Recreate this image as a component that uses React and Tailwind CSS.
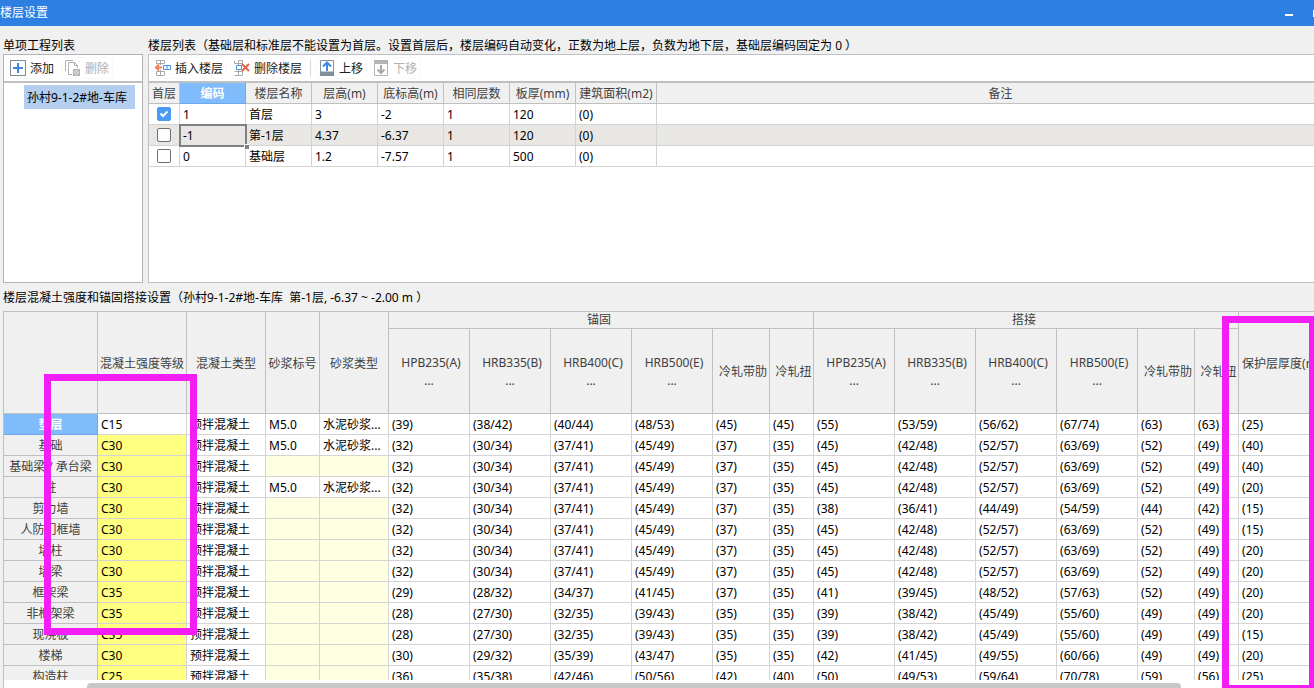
import React, { useState } from 'react';
import { clsx } from 'clsx';

const FLOORS = [
  { code: '1', name: '首层', height: '3', bottom: '-2', same: '1', slab: '120', area: '(0)', note: '' },
  { code: '-1', name: '第-1层', height: '4.37', bottom: '-6.37', same: '1', slab: '120', area: '(0)', note: '' },
  { code: '0', name: '基础层', height: '1.2', bottom: '-7.57', same: '1', slab: '500', area: '(0)', note: '' },
];

const FLOOR_HEADS = ['楼层名称', '层高(m)', '底标高(m)', '相同层数', '板厚(mm)', '建筑面积(m2)', '备注'];

const REBARS = ['HPB235(A)', 'HRB335(B)', 'HRB400(C)', 'HRB500(E)'];

// name, grade, mortar grade, mortar type, anchorage x6, lap x6, cover
const MEMBERS = [
  ['垫层', 'C15', 'M5.0', '水泥砂浆...', '39', '38/42', '40/44', '48/53', '45', '45', '55', '53/59', '56/62', '67/74', '63', '63', '25'],
  ['基础', 'C30', 'M5.0', '水泥砂浆...', '32', '30/34', '37/41', '45/49', '37', '35', '45', '42/48', '52/57', '63/69', '52', '49', '40'],
  ['基础梁 / 承台梁', 'C30', '', '', '32', '30/34', '37/41', '45/49', '37', '35', '45', '42/48', '52/57', '63/69', '52', '49', '40'],
  ['柱', 'C30', 'M5.0', '水泥砂浆...', '32', '30/34', '37/41', '45/49', '37', '35', '45', '42/48', '52/57', '63/69', '52', '49', '20'],
  ['剪力墙', 'C30', '', '', '32', '30/34', '37/41', '45/49', '37', '35', '38', '36/41', '44/49', '54/59', '44', '42', '15'],
  ['人防门框墙', 'C30', '', '', '32', '30/34', '37/41', '45/49', '37', '35', '45', '42/48', '52/57', '63/69', '52', '49', '15'],
  ['墙柱', 'C30', '', '', '32', '30/34', '37/41', '45/49', '37', '35', '45', '42/48', '52/57', '63/69', '52', '49', '20'],
  ['墙梁', 'C30', '', '', '32', '30/34', '37/41', '45/49', '37', '35', '45', '42/48', '52/57', '63/69', '52', '49', '20'],
  ['框架梁', 'C35', '', '', '29', '28/32', '34/37', '41/45', '37', '35', '41', '39/45', '48/52', '57/63', '52', '49', '20'],
  ['非框架梁', 'C35', '', '', '28', '27/30', '32/35', '39/43', '35', '35', '39', '38/42', '45/49', '55/60', '49', '49', '20'],
  ['现浇板', 'C35', '', '', '28', '27/30', '32/35', '39/43', '35', '35', '39', '38/42', '45/49', '55/60', '49', '49', '15'],
  ['楼梯', 'C30', '', '', '30', '29/32', '35/39', '43/47', '35', '35', '42', '41/45', '49/55', '60/66', '49', '49', '20'],
  ['构造柱', 'C25', '', '', '36', '35/38', '42/46', '50/56', '42', '40', '50', '49/53', '59/64', '70/78', '59', '56', '25'],
];

const AddIcon = () => (
  <svg width="16" height="16" viewBox="0 0 16 16" fill="none">
    <rect x="0.5" y="0.5" width="15" height="15" stroke="#7b8c98" />
    <path d="M8 3v10M3 8h10" stroke="#3d8be0" strokeWidth="2" />
  </svg>
);

const RemoveIcon = () => (
  <svg width="16" height="16" viewBox="0 0 16 16" fill="none" stroke="#b0b0b0">
    <path d="M0.5 11V0.5H8" />
    <path d="M7 14.5H3.5V2.5H9.5L12.5 5.5V8" />
    <path d="M9.5 2.5V5.5H12.5" />
    <rect x="8.5" y="9.5" width="6" height="6" fill="#d8d8d8" />
    <path d="M9 10l5 5M14 10l-5 5" />
  </svg>
);

const InsertFloorIcon = () => (
  <svg width="16" height="16" viewBox="0 0 16 16" fill="none">
    <path d="M1.5 0.5H9.5V3.5H1.5ZM5.5 0.500V3.5M5.5 3.5V5M1.5 11.5H9.5V15.5H1.5ZM5.5 10V15.5" stroke="#a8a8a8" />
    <path d="M1 7.5H7M4 4.5L1 7.5L4 10.5" stroke="#f0825a" strokeWidth="2" />
    <path d="M8.5 5.5H15.5V9.5H8.5ZM12 5.5V9.5" stroke="#4a90e2" />
  </svg>
);

const DeleteFloorIcon = () => (
  <svg width="16" height="16" viewBox="0 0 16 16" fill="none">
    <path d="M0.5 3.5H8.500M4.5 3.5V0.5M0.5 3.5V1M8.5 3.5V0.5H4.5M4.5 3.5V5M0.5 11.5H8.5M4.500 10V15.5M0.5 15.5H8.5V11.5" stroke="#a8a8a8" />
    <path d="M2.5 5.5H7.5V9.5H2.5Z" stroke="#4a90e2" />
    <path d="M8 4L15 11M15 4L8 11" stroke="#e0674c" strokeWidth="2" />
  </svg>
);

const UpIcon = () => (
  <svg width="15" height="16" viewBox="0 0 15 16" fill="none">
    <path d="M0.5 0.5H13.5V12H0.5Z" stroke="#7f909b" />
    <path d="M0 12H14V16H0Z" fill="#7f909b" />
    <path d="M7 11V3M3 6.5L7 2.5L11 6.5" stroke="#3d8be0" strokeWidth="2" />
  </svg>
);

const DownIcon = () => (
  <svg width="15" height="16" viewBox="0 0 15 16" fill="none">
    <path d="M0.5 3V15.5H13.5V3" stroke="#b4b4b4" />
    <path d="M0 0H14V4H0Z" fill="#b4b4b4" />
    <path d="M7 5V13M3.5 9.5L7 13L10.5 9.5" stroke="#a8a8a8" strokeWidth="2" />
  </svg>
);

const ToolButton = ({ icon, label, disabled }) => (
  <button
    type="button"
    disabled={disabled}
    className="flex h-[22px] shrink-0 items-center gap-1 rounded border border-[#f8f8f8] px-[3px] text-[#202020] disabled:text-[#b0b0b0]"
  >
    {icon}
    <span className="pt-[2px]">{label}</span>
  </button>
);

const headBase = 'border-r border-b border-[#c0c0c0] bg-[#f0f0f0] font-normal text-[#404040] whitespace-nowrap overflow-hidden';
const headCell = `${headBase} p-0 pt-[2px]`;
const bodyCell = 'h-[21px] border-r border-b border-[#d4d4d4] p-0 pt-[2px] pl-[3px] whitespace-nowrap overflow-hidden';

const FloorTable = () => {
  const [first, setFirst] = useState(0);

  return (
    <table className="w-[calc(100%+31px)] table-fixed border-separate border-spacing-0">
      <colgroup>
        <col className="w-[31px]" />
        {[0, 1, 2, 3, 4, 5].map((i) => (
          <col key={i} className="w-[66px]" />
        ))}
        <col className="w-[81px]" />
        <col />
      </colgroup>
      <thead>
        <tr className="h-[21px]">
          <th className={headCell}>首层</th>
          <th className="border-r border-b border-[#6aa9ee] bg-[#80bbfb] p-0 pt-[2px] font-bold text-white">编码</th>
          {FLOOR_HEADS.map((head) => (
            <th key={head} className={headCell}>{head}</th>
          ))}
        </tr>
      </thead>
      <tbody>
        {FLOORS.map((floor, i) => (
          <tr key={floor.code} className={i === 1 ? 'bg-[#e8e7e3]' : 'bg-white'}>
            <td className="h-[21px] border-r border-b border-[#d4d4d4] p-0">
              <label className="relative mx-auto block h-[14px] w-[14px]">
                <input
                  type="checkbox"
                  aria-label={`首层 ${floor.name}`}
                  checked={first === i}
                  onChange={() => setFirst(i)}
                  className="block h-[14px] w-[14px] appearance-none rounded-[2px] border border-[#707070] bg-white checked:border-[#4a9bf5] checked:bg-[#4a9bf5]"
                />
                {first === i && (
                  <svg className="absolute inset-0" width="14" height="14" viewBox="0 0 14 14" fill="none">
                    <path d="M3.5 6.5L6 9L10.500 4.500" stroke="#fff" strokeWidth="2" />
                  </svg>
                )}
              </label>
            </td>
            <td
              className={clsx(
                'relative h-[21px] border-r border-b border-[#d4d4d4] p-0 pt-[2px] pl-[3px]',
                i === 1 && 'z-10 outline-2 -outline-offset-1 outline-[#808080]'
              )}
            >
              {floor.code}
              {i === 1 && <span className="absolute -right-[4px] -bottom-[4px] h-[5px] w-[5px] border-t border-l border-white bg-[#808080]" />}
            </td>
            <td className={bodyCell}>{floor.name}</td>
            <td className={bodyCell}>{floor.height}</td>
            <td className={bodyCell}>{floor.bottom}</td>
            <td className={bodyCell}>{floor.same}</td>
            <td className={bodyCell}>{floor.slab}</td>
            <td className={bodyCell}>{floor.area}</td>
            <td className={bodyCell}>{floor.note}</td>
          </tr>
        ))}
      </tbody>
    </table>
  );
};

const RebarHeads = () => (
  <>
    {REBARS.map((bar) => (
      <th key={bar} className={clsx(headBase, 'p-0 pt-[2px] pl-1 leading-[18px]')}>
        {bar}
        <br />
        <span className="pr-1">...</span>
      </th>
    ))}
    <th className={clsx(headBase, 'p-0 pt-[2px] pl-1')}>冷轧带肋</th>
    <th className={clsx(headBase, 'p-0 pt-[2px] pl-1')}>冷轧扭</th>
  </>
);

const RebarCols = () => (
  <>
    <col className="w-[81px]" />
    <col className="w-[81px]" />
    <col className="w-[81px]" />
    <col className="w-[81px]" />
    <col className="w-[57px]" />
    <col className="w-[44px]" />
  </>
);

const StrengthTable = () => (
  <table className="w-[1325px] table-fixed border-separate border-spacing-0">
    <colgroup>
      <col className="w-[94px]" />
      <col className="w-[89px]" />
      <col className="w-[79px]" />
      <col className="w-[54px]" />
      <col className="w-[69px]" />
      <RebarCols />
      <RebarCols />
      <col className="w-[90px]" />
    </colgroup>
    <thead>
      <tr className="h-[17px] leading-4">
        <th rowSpan={2} className={headCell} />
        <th rowSpan={2} className={headCell}>混凝土强度等级</th>
        <th rowSpan={2} className={headCell}>混凝土类型</th>
        <th rowSpan={2} className={headCell}>砂浆标号</th>
        <th rowSpan={2} className={headCell}>砂浆类型</th>
        <th colSpan={6} className={clsx(headBase, 'p-0 pr-1')}>锚固</th>
        <th colSpan={6} className={clsx(headBase, 'p-0 pr-1')}>搭接</th>
        <th rowSpan={2} className={clsx(headBase, 'p-0 pt-[2px] pl-[3px] text-left')}>保护层厚度(mm)</th>
      </tr>
      <tr className="h-[85px]">
        <RebarHeads />
        <RebarHeads />
      </tr>
    </thead>
    <tbody className="bg-white">
      {MEMBERS.map(([name, grade, mortar, mortarType, ...values], i) => (
        <tr key={name}>
          <th
            className={clsx(
              'h-[21px] border-r border-b p-0 pt-[2px] whitespace-nowrap',
              i === 0 ? 'border-[#6aa9ee] bg-[#80bbfb] font-bold text-white' : 'border-[#c0c0c0] bg-[#f0f0f0] font-normal text-[#404040]'
            )}
          >
            {name}
          </th>
          <td className={clsx(bodyCell, i > 0 && 'bg-[#ffff80]')}>{grade}</td>
          <td className={bodyCell}>预拌混凝土</td>
          <td className={clsx(bodyCell, !mortar && 'bg-[#ffffe1]')}>{mortar}</td>
          <td className={clsx(bodyCell, !mortarType && 'bg-[#ffffe1]')}>{mortarType}</td>
          {values.map((value, j) => (
            <td key={j} className={bodyCell}>({value})</td>
          ))}
        </tr>
      ))}
    </tbody>
  </table>
);

const App = () => (
  <div className="relative flex h-screen flex-col overflow-hidden bg-[#f0f0f0] font-['Noto_Sans','Noto_Sans_CJK_SC',sans-serif] text-xs text-black">
    {/* Title bar */}
    <header className="flex h-[26px] shrink-0 items-center justify-between bg-[#2d80e2] text-white">
      <h1>楼层设置</h1>
      <div className="flex items-center gap-5">
        <button type="button" aria-label="最小化" className="flex h-4 w-2 items-center pt-1">
          <span className="h-[2px] w-2 bg-white" />
        </button>
        <button type="button" aria-label="最大化" className="h-[7px] w-px bg-white" />
      </div>
    </header>

    {/* Project list and floor list */}
    <div className="flex shrink-0 gap-[5px] pl-[3px] pt-[11px]">
      <section className="w-[140px] shrink-0">
        <h2 className="h-[17px] leading-[18px]">单项工程列表</h2>
        <div className="h-[229px] border border-[#b4b4b8] bg-white">
          <div className="flex h-7 items-center gap-[3px] border-b-2 border-[#c0c0c0] pl-[2px]">
            <ToolButton icon={<AddIcon />} label="添加" />
            <ToolButton icon={<RemoveIcon />} label="删除" disabled />
          </div>
          <ul className="pt-[2px] pl-5">
            <li className="h-6 w-[111px] bg-[#b3ceef] px-[3px] leading-[26px] whitespace-nowrap">孙村9-1-2#地-车库</li>
          </ul>
        </div>
      </section>
      <section className="min-w-0 flex-1">
        <h2 className="h-[17px] leading-[18px] whitespace-nowrap">
          楼层列表（基础层和标准层不能设置为首层。设置首层后，楼层编码自动变化，正数为地上层，负数为地下层，基础层编码固定为 0 ）
        </h2>
        <div className="h-[229px] overflow-hidden border border-r-0 border-[#c0c0c8] bg-white">
          <div className="flex h-7 items-center gap-[3px] border-b-2 border-[#c0c0c0] pl-[2px]">
            <ToolButton icon={<InsertFloorIcon />} label="插入楼层" />
            <ToolButton icon={<DeleteFloorIcon />} label="删除楼层" />
            <span className="mr-[2px] ml-px h-[18px] w-px bg-[#d8d8d8]" />
            <ToolButton icon={<UpIcon />} label="上移" />
            <ToolButton icon={<DownIcon />} label="下移" disabled />
          </div>
          <FloorTable />
        </div>
      </section>
    </div>

    {/* Concrete strength, anchorage and lap settings */}
    <section className="flex min-h-0 flex-1 flex-col pl-[3px] pt-[6px]">
      <h2 className="h-[22px] shrink-0 leading-[18px] whitespace-pre">楼层混凝土强度和锚固搭接设置（孙村9-1-2#地-车库  第-1层, -6.37 ~ -2.00 m ）</h2>
      <div className="min-h-0 flex-1 overflow-hidden border-t border-l border-[#c0c0c0] bg-white">
        <StrengthTable />
      </div>
      <div className="h-2 shrink-0 border-l border-[#c0c0c0] bg-white pt-[3px] pl-[83px]">
        <div className="h-[5px] w-[1094px] rounded-t bg-[#c8c8c8]" />
      </div>
    </section>

    {/* Highlight frames */}
    <div className="pointer-events-none absolute top-[374px] left-[44px] h-[261px] w-[153px] border-[7px] border-[#f51df5]" />
    <div className="pointer-events-none absolute top-[316px] left-[1222px] h-[376px] w-[94px] border-[7px] border-[#f51df5]" />
  </div>
);

export default App;
